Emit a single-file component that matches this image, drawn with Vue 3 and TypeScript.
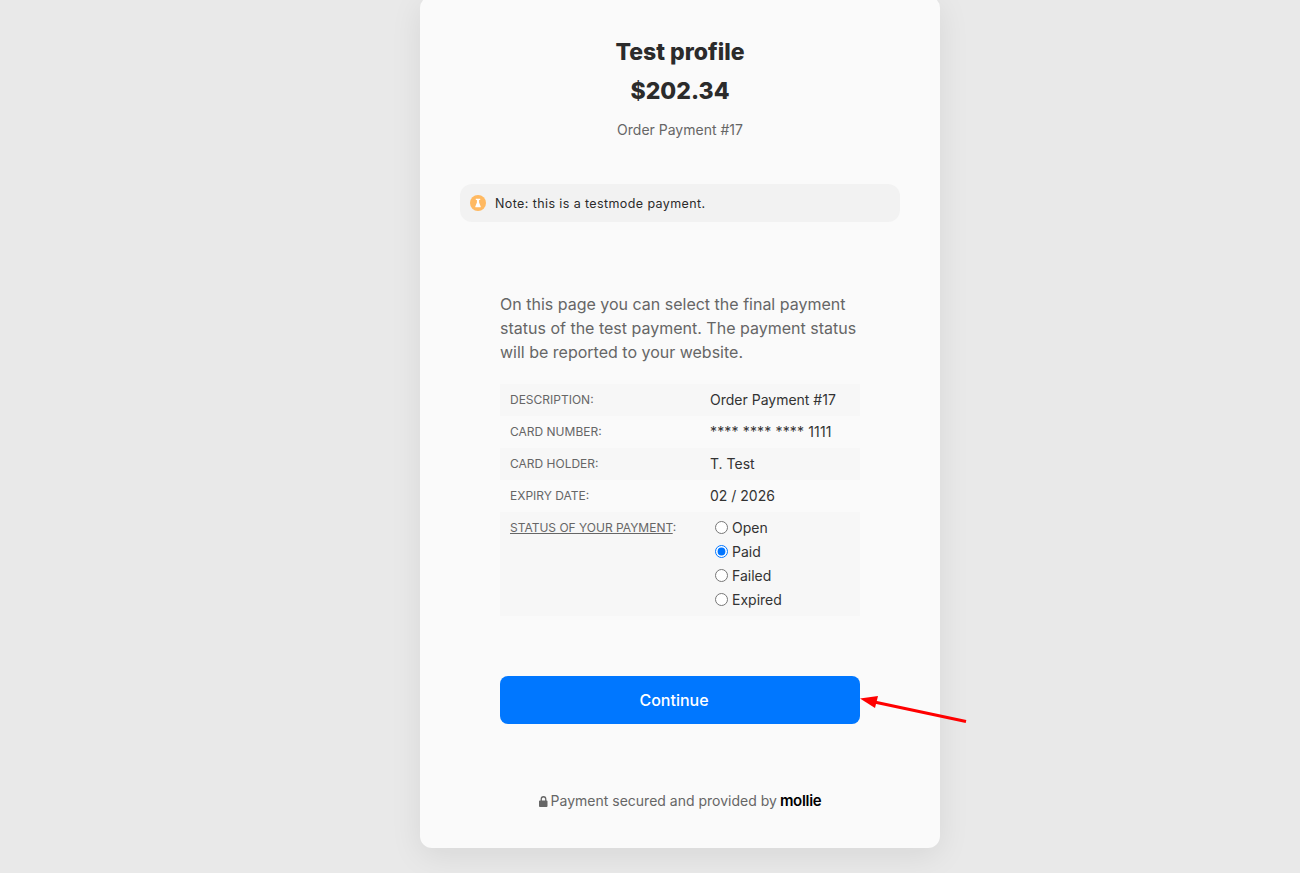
<template>
  <div class="page">
    <main class="card">
      <header class="summary">
        <h1 class="summary__name">Test profile</h1>
        <div class="summary__amount">$202.34</div>
        <p class="summary__desc">Order Payment #17</p>
      </header>

      <div class="notice">
        <svg class="notice__icon" width="16" height="16" viewBox="0 0 16 16">
          <circle cx="8" cy="8" r="8" fill="#ffb961" />
          <path d="M5.8 3.8h4.4v1.1h-1.1v2.6l1.6 3.9c.2.5-.1.9-.6.9H5.9c-.5 0-.8-.4-.6-.9l1.6-3.9V4.9H5.8z" fill="#fff" />
        </svg>
        <span>Note: this is a testmode payment.</span>
      </div>

      <form class="form" @submit.prevent>
        <p class="form__intro">
          On this page you can select the final payment status of the test payment. The payment
          status will be reported to your website.
        </p>

        <div class="details">
          <div v-for="row in rows" :key="row.label" class="details__row">
            <div class="details__label">{{ row.label }}:</div>
            <div class="details__value" :class="{ 'details__value--card': row.label === 'CARD NUMBER' }">{{ row.value }}</div>
          </div>
          <div class="details__row details__row--status">
            <div class="details__label"><u>STATUS OF YOUR PAYMENT</u>:</div>
            <div class="status">
              <label v-for="option in statuses" :key="option" class="status__option">
                <input v-model="selected" type="radio" name="status" :value="option" />
                <span>{{ option }}</span>
              </label>
            </div>
          </div>
        </div>

        <button class="continue" type="submit">Continue</button>
      </form>

      <footer class="secured">
        <svg width="9" height="11" viewBox="0 0 9 11" class="secured__lock">
          <path d="M1.6 4.4V3a2.9 2.9 0 0 1 5.8 0v1.4h.2a.9.9 0 0 1 .9.9v4.8a.9.9 0 0 1-.9.9H.9a.9.9 0 0 1-.9-.9V5.3a.9.9 0 0 1 .9-.9zm1.3 0h3.2V3a1.6 1.6 0 0 0-3.2 0z" fill="#666" />
        </svg>
        <span>Payment secured and provided by</span>
        <span class="secured__brand">mollie</span>
      </footer>
    </main>

    <svg class="arrow" width="120" height="40" viewBox="0 0 120 40">
      <line x1="106" y1="31.5" x2="12" y2="11.5" stroke="#ff0000" stroke-width="3" />
      <polygon points="0,8.5 18,6 15,18" fill="#ff0000" />
    </svg>
  </div>
</template>

<script setup lang="ts">
import { ref } from 'vue'

const rows = [
  { label: 'DESCRIPTION', value: 'Order Payment #17' },
  { label: 'CARD NUMBER', value: '**** **** **** 1111' },
  { label: 'CARD HOLDER', value: 'T. Test' },
  { label: 'EXPIRY DATE', value: '02 / 2026' }
]

const statuses = ['Open', 'Paid', 'Failed', 'Expired']
const selected = ref('Paid')
</script>

<style>
html,
body {
  margin: 0;
  background: #e9e9e9;
  overflow: hidden;
}
</style>

<style scoped>
.page {
  position: relative;
  height: 873px;
  font-family: Inter, 'Liberation Sans', sans-serif;
  color: #2b2b2b;
  overflow: hidden;
}

.card {
  box-sizing: border-box;
  width: 520px;
  height: 852px;
  margin: -4px 0 0 420px;
  padding: 44px 40px 0;
  background: #fafafa;
  border-radius: 12px;
  box-shadow: 0 8px 32px rgba(0, 0, 0, 0.08);
}

.summary {
  text-align: center;
}

.summary__name {
  margin: 0;
  font-size: 23px;
  font-weight: 800;
  line-height: 24px;
}

.summary__amount {
  margin-top: 15px;
  font-size: 23px;
  font-weight: 800;
  line-height: 24px;
}

.summary__desc {
  margin: 17px 0 0;
  font-size: 14px;
  line-height: 20px;
  color: #666;
}

.notice {
  display: flex;
  align-items: center;
  gap: 9px;
  height: 38px;
  margin-top: 44px;
  padding-left: 10px;
  background: #f2f2f2;
  border-radius: 12px;
  font-size: 12.5px;
  letter-spacing: 0.4px;
}

.form {
  padding: 70px 40px 0;
}

.form__intro {
  margin: 0;
  font-size: 16px;
  line-height: 24px;
  color: #666;
}

.details {
  margin-top: 20px;
}

.details__row {
  display: flex;
  box-sizing: border-box;
  height: 32px;
  padding-bottom: 2px;
  align-items: center;
}

.details__row:nth-child(odd) {
  background: #f7f7f7;
}

.details__row--status {
  height: 104px;
  padding-bottom: 0;
  align-items: flex-start;
}

.details__label {
  width: 210px;
  padding-left: 10px;
  box-sizing: border-box;
  font-size: 12px;
  color: #666;
}

.details__row--status .details__label {
  padding-top: 8px;
}

.details__value {
  font-size: 14px;
  color: #333;
}

.details__value--card {
  letter-spacing: 0.15px;
}

.status {
  padding-top: 3px;
}

.status__option {
  display: flex;
  align-items: center;
  height: 24px;
  font-size: 14px;
  color: #333;
}

.status__option input {
  width: 13px;
  height: 13px;
  margin: 0 4px 0 5px;
}

.continue {
  display: block;
  width: 360px;
  height: 48px;
  margin-top: 60px;
  padding: 0 12px 0 0;
  border: 0;
  border-radius: 8px;
  background: #0077ff;
  color: #fff;
  font-family: inherit;
  font-size: 16px;
  font-weight: 500;
}

.secured {
  display: flex;
  justify-content: center;
  align-items: center;
  gap: 3px;
  margin-top: 67px;
  font-size: 14px;
  line-height: 20px;
  color: #666;
}

.secured__brand {
  font-size: 15px;
  font-weight: 600;
  color: #000;
  letter-spacing: -0.3px;
}

.arrow {
  position: absolute;
  left: 860px;
  top: 690px;
}
</style>
